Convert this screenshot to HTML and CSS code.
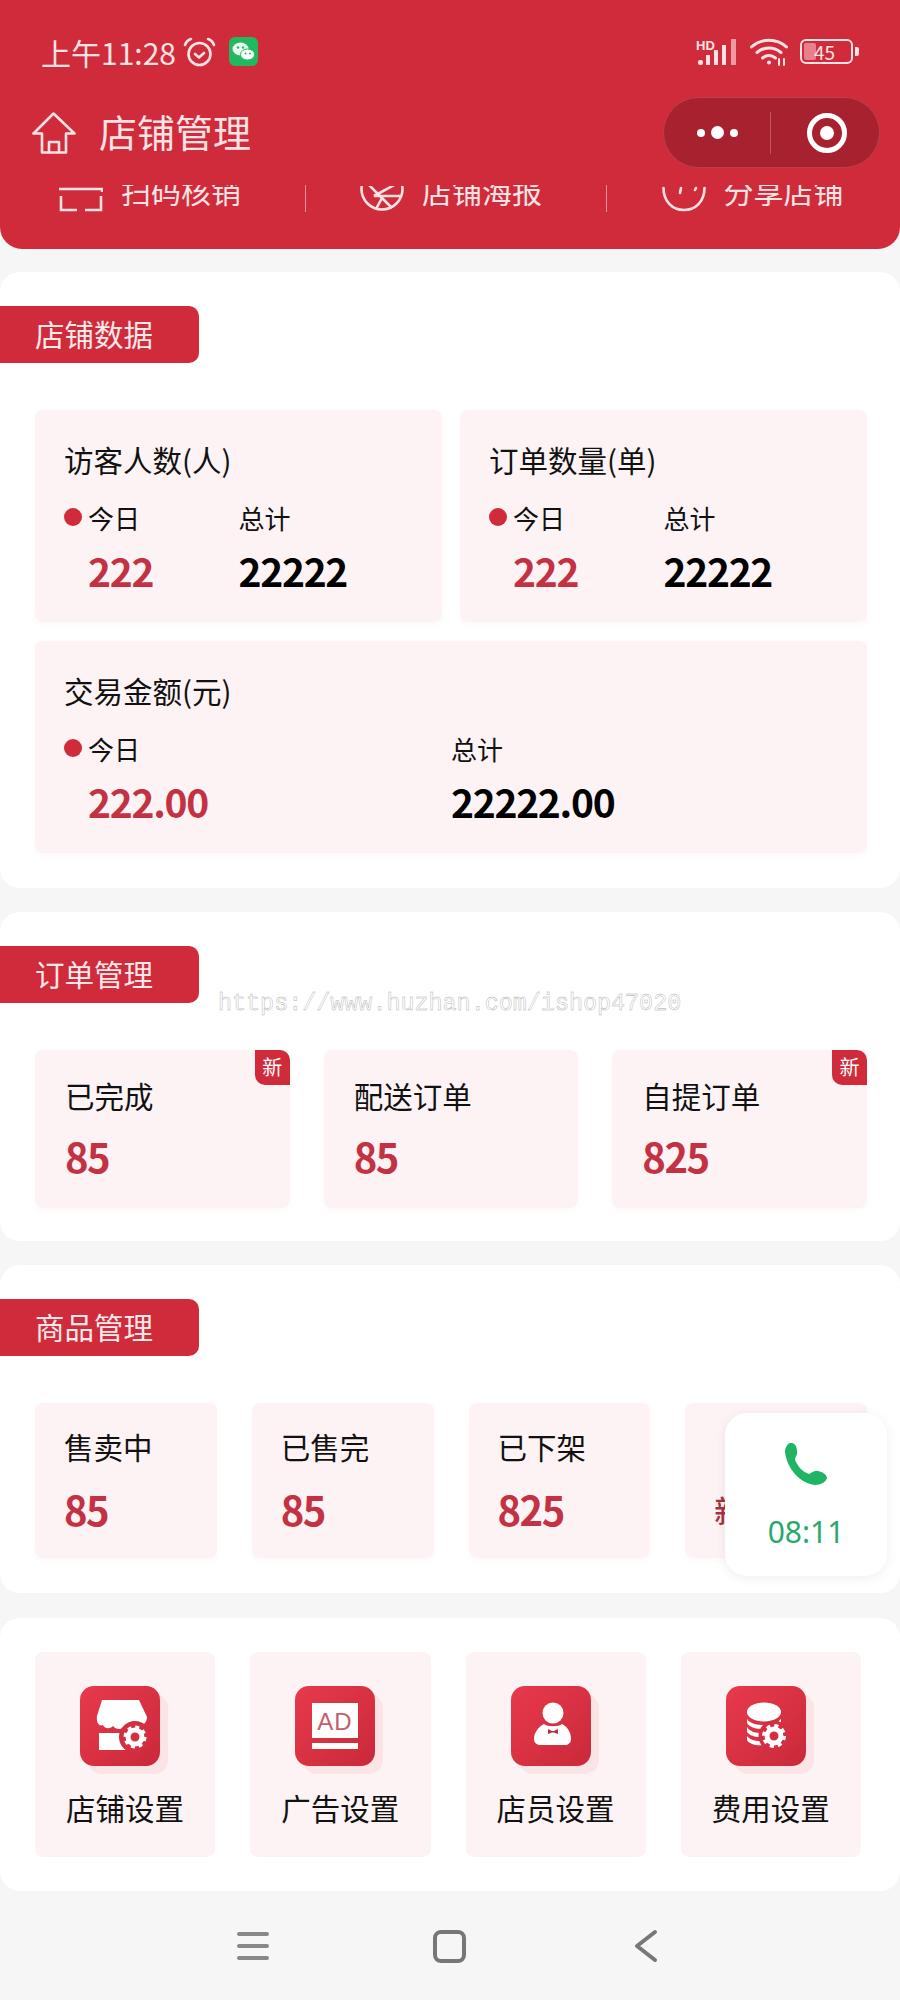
FILE: index.html
```html
<!DOCTYPE html>
<html lang="zh-CN">
<head>
  <meta charset="UTF-8">
  <title>店铺管理</title>
  <link rel="stylesheet" href="styles.css">
</head>
<body>
  <header class="header">
    <div class="status">
      <span class="status-time">上午11:28</span>
      <svg class="ico-alarm" width="33" height="30" viewBox="0 0 33 30" fill="none" stroke="#fbe3e5" stroke-width="2.6" stroke-linecap="round" stroke-linejoin="round">
        <circle cx="16.500" cy="17" r="11"/>
        <path d="M12 17l4 3.500 5-4.500"/>
        <path d="M2 8c1-3 3-5 6-6M31 8c-1-3-3-5-6-6"/>
      </svg>
      <svg class="ico-wechat" width="29" height="29" viewBox="0 0 29 29">
        <rect width="29" height="29" rx="6" fill="#21b95f"/>
        <ellipse cx="11.500" cy="12" rx="8" ry="6.500" fill="#eafaf0"/>
        <ellipse cx="18.500" cy="17.500" rx="7" ry="5.500" fill="#fff" stroke="#21b95f"/>
        <circle cx="9" cy="10.500" r="1.200" fill="#21b95f"/>
        <circle cx="14" cy="10.500" r="1.200" fill="#21b95f"/>
        <circle cx="16.500" cy="16.500" r="1" fill="#21b95f"/>
        <circle cx="21" cy="16.500" r="1" fill="#21b95f"/>
      </svg>
      <div class="status-right">
        <svg width="42" height="28" viewBox="0 0 42 28">
          <text x="0" y="12" class="ico-hd">HD</text>
          <rect x="2" y="22" width="5" height="5" rx="2" fill="#fbe3e5"/>
          <rect x="10" y="17" width="4" height="10" fill="#fbe3e5"/>
          <rect x="18" y="12" width="4" height="15" fill="#fbe3e5"/>
          <rect x="26" y="7" width="4" height="20" fill="#fbe3e5"/>
          <rect x="35" y="1" width="5" height="26" fill="#ee9aa3"/>
        </svg>
        <svg width="38" height="29" viewBox="0 0 38 29" fill="none" stroke="#fbe3e5" stroke-width="3" stroke-linecap="round">
          <path d="M1.500 10c10-9 25-9 35 0M7 15.500c7-6 17-6 24 0M12.500 21c4-3 9-3 13 0"/>
          <circle cx="19" cy="25.500" r="2" fill="#fbe3e5" stroke="none"/>
          <path d="M29 22v6M34 22v6" stroke-width="2"/>
        </svg>
        <div class="battery">
          <span class="battery-fill"></span>
          <span class="battery-num">45</span>
        </div>
      </div>
    </div>
    <div class="nav">
      <svg class="ico-home" width="44" height="42" viewBox="0 0 44 42" fill="none" stroke="#fbe3e5" stroke-width="2.600" stroke-linejoin="round">
        <path d="M21.500 1.500L1.500 21.500H10V40.500H34V21.500H42.500Z"/>
        <path d="M17 40.500V30H27V40.500"/>
      </svg>
      <h1 class="nav-title">店铺管理</h1>
      <div class="capsule">
        <div class="capsule-dots">
          <i class="dot-s"></i><i class="dot-b"></i><i class="dot-s"></i>
        </div>
        <div class="capsule-target"><i></i></div>
      </div>
    </div>
    <div class="quick">
      <div class="quick-item">
        <svg width="44" height="26" viewBox="0 0 44 26" fill="none" stroke="#fbe3e5" stroke-width="2.600">
          <path d="M0 3H44M43 3V6"/>
          <path d="M2 10V24H18M42 10V24H26"/>
        </svg>
        <span>扫码核销</span>
      </div>
      <div class="quick-item">
        <svg width="44" height="26" viewBox="0 0 44 26" fill="none" stroke="#fbe3e5" stroke-width="2.600">
          <circle cx="22" cy="3" r="20.500"/>
          <path d="M8 -2L22 12L16 23M36 -2L14 10H42M22 12L32 22"/>
        </svg>
        <span>店铺海报</span>
      </div>
      <div class="quick-item">
        <svg width="44" height="26" viewBox="0 0 44 26" fill="none" stroke="#fbe3e5" stroke-width="2.600" stroke-linecap="round">
          <path d="M1.500 2C1.500 15 10 24 22 24S42.500 15 42.500 2"/>
          <path d="M19 2L18 7M34 2L33 4" />
        </svg>
        <span>分享店铺</span>
      </div>
    </div>
  </header>

  <section class="panel panel-data">
    <div class="tag">店铺数据</div>
    <div class="data-grid">
      <div class="data-card">
        <div class="data-title">访客人数(人)</div>
        <div class="data-cols">
          <div class="data-col first">
            <div class="data-label"><i class="data-dot"></i>今日</div>
            <div class="data-num red">222</div>
          </div>
          <div class="data-col">
            <div class="data-label">总计</div>
            <div class="data-num">22222</div>
          </div>
        </div>
      </div>
      <div class="data-card">
        <div class="data-title">订单数量(单)</div>
        <div class="data-cols">
          <div class="data-col first">
            <div class="data-label"><i class="data-dot"></i>今日</div>
            <div class="data-num red">222</div>
          </div>
          <div class="data-col">
            <div class="data-label">总计</div>
            <div class="data-num">22222</div>
          </div>
        </div>
      </div>
      <div class="data-card wide">
        <div class="data-title">交易金额(元)</div>
        <div class="data-cols">
          <div class="data-col first">
            <div class="data-label"><i class="data-dot"></i>今日</div>
            <div class="data-num red">222.00</div>
          </div>
          <div class="data-col">
            <div class="data-label">总计</div>
            <div class="data-num">22222.00</div>
          </div>
        </div>
      </div>
    </div>
  </section>

  <section class="panel panel-orders">
    <div class="tag">订单管理</div>
    <div class="stat-row three">
      <div class="stat-card">
        <span class="badge">新</span>
        <div class="stat-title">已完成</div>
        <div class="stat-num">85</div>
      </div>
      <div class="stat-card">
        <div class="stat-title">配送订单</div>
        <div class="stat-num">85</div>
      </div>
      <div class="stat-card">
        <span class="badge">新</span>
        <div class="stat-title">自提订单</div>
        <div class="stat-num">825</div>
      </div>
    </div>
  </section>

  <section class="panel panel-goods">
    <div class="tag">商品管理</div>
    <div class="stat-row four">
      <div class="stat-card">
        <div class="stat-title">售卖中</div>
        <div class="stat-num">85</div>
      </div>
      <div class="stat-card">
        <div class="stat-title">已售完</div>
        <div class="stat-num">85</div>
      </div>
      <div class="stat-card">
        <div class="stat-title">已下架</div>
        <div class="stat-num">825</div>
      </div>
      <div class="stat-card">
        <div class="stat-title">&nbsp;</div>
        <div class="stat-new">新增</div>
      </div>
    </div>
  </section>

  <section class="panel panel-tools">
    <div class="tool-row">
      <div class="tool-card">
        <div class="tool-icon">
          <svg width="80" height="80" viewBox="0 0 80 80" fill="#fff">
            <path d="M22 14H59L67 31C67 37 62 41 58 39C55 43 50 43 46 39C43 44 36 44 33 40C29 44 24 42 23 39C19 41 16 36 17 30Z"/>
            <rect x="19" y="47" width="36" height="17"/>
            <circle cx="55" cy="51" r="16" fill="#d42f40"/>
            <circle cx="55" cy="51" r="9.500" fill="none" stroke="#fff" stroke-width="4" stroke-dasharray="3.730 3.730"/>
            <circle cx="55" cy="51" r="7" fill="none" stroke="#fff" stroke-width="5"/>
          </svg>
        </div>
        <div class="tool-name">店铺设置</div>
      </div>
      <div class="tool-card">
        <div class="tool-icon">
          <svg width="80" height="80" viewBox="0 0 80 80">
            <rect x="17" y="17" width="46" height="35" fill="#fff"/>
            <text x="40" y="44" class="ico-ad">AD</text>
            <rect x="17" y="57" width="46" height="6" fill="#fff"/>
          </svg>
        </div>
        <div class="tool-name">广告设置</div>
      </div>
      <div class="tool-card">
        <div class="tool-icon">
          <svg width="80" height="80" viewBox="0 0 80 80" fill="#fff">
            <circle cx="42" cy="27" r="10.500"/>
            <path d="M33 38C36 41 48 41 51 38C57 41 60 47 60 53C60 57 57 59 54 59H30C26 59 23 57 23 53C23 47 27 41 33 38Z"/>
            <path d="M37 43L41 45H43L47 43V48L43 46.500H41L37 48Z" fill="#b5303f"/>
          </svg>
        </div>
        <div class="tool-name">店员设置</div>
      </div>
      <div class="tool-card">
        <div class="tool-icon">
          <svg width="80" height="80" viewBox="0 0 80 80" fill="#fff">
            <ellipse cx="38" cy="26" rx="17" ry="9.500"/>
            <path d="M21 33C24 38 32 39 38 39C44 39 50 38 55 33V37C51 42 44 43 38 43C31 43 24 42 21 37Z"/>
            <path d="M21 41C24 46 30 47 36 47L34 51C28 51 23 49 21 46Z"/>
            <path d="M21 50C24 54 29 55 34 55L38 59C30 60 23 58 21 54Z"/>
            <circle cx="48" cy="50" r="15.500" fill="#d42f40"/>
            <circle cx="48" cy="50" r="10" fill="none" stroke="#fff" stroke-width="4" stroke-dasharray="3.930 3.930"/>
            <circle cx="48" cy="50" r="7" fill="none" stroke="#fff" stroke-width="5"/>
          </svg>
        </div>
        <div class="tool-name">费用设置</div>
      </div>
    </div>
  </section>

  <nav class="bottom-nav">
    <div class="ico-menu"><i></i><i></i><i></i></div>
    <div class="ico-square"></div>
    <svg class="ico-back" width="24" height="34" viewBox="0 0 24 34" fill="none" stroke="#777" stroke-width="4" stroke-linecap="round" stroke-linejoin="round">
      <path d="M21 3L3 17L21 31"/>
    </svg>
  </nav>

  <div class="watermark">https://www.huzhan.com/ishop47020</div>

  <div class="call">
    <svg width="42" height="42" viewBox="0 0 42 42">
      <path fill="#1fb564" d="M5 0C9-1 12 3 12 8C13 12 10 14 10 17C13 24 18 29 24 31C27 30 29 27 33 28C38 29 42 32 42 35C41 39 36 42 30 42C15 40 2 26 0 9C0 5 2 1 5 0Z"/>
    </svg>
    <div class="call-time">08:11</div>
  </div>
</body>
</html>
```

FILE: styles.css
```css
* {
  box-sizing: border-box;
}
body {
  position: relative;
  margin: 0;
  width: 900px;
  height: 2000px;
  overflow: hidden;
  background-color: #f6f6f6;
  color: #111;
  font-family: "Noto Sans CJK SC", "Noto Sans", sans-serif;
}
i {
  display: block;
}

/* header */
.header {
  height: 249px;
  background-color: #d02b3a;
  border-radius: 0 0 22px 22px;
  color: #fbe3e5;
  overflow: hidden;
}
.status {
  display: flex;
  align-items: center;
  height: 85px;
  padding: 18px 47px 0 41px;
}
.status-time {
  font-size: 30px;
  line-height: 40px;
  letter-spacing: 0;
}
.ico-alarm {
  margin-left: 7px;
}
.ico-wechat {
  margin-left: 13px;
}
.status-right {
  display: flex;
  align-items: center;
  gap: 12px;
  margin-left: auto;
}
.ico-hd {
  font: bold 13px "Liberation Sans", sans-serif;
  fill: #fbe3e5;
}
.battery {
  position: relative;
  width: 53px;
  height: 25px;
  border: 2px solid #fbe3e5;
  border-radius: 6px;
}
.battery::after {
  content: "";
  position: absolute;
  right: -8px;
  top: 6px;
  width: 4px;
  height: 9px;
  background-color: #fbe3e5;
  border-radius: 0 2px 2px 0;
}
.battery-fill {
  display: block;
  width: 12px;
  height: 17px;
  margin: 2px 0 0 2px;
  background-color: #e8808c;
  border-radius: 2px;
}
.battery-num {
  position: absolute;
  left: 12px;
  top: 0;
  font-size: 19px;
  line-height: 21px;
}
.nav {
  display: flex;
  align-items: center;
  height: 71px;
  margin-top: 12px;
  padding-left: 32px;
}
.nav-title {
  margin: -4px 0 0 23px;
  font-size: 38px;
  font-weight: 400;
  line-height: 50px;
}
.capsule {
  display: flex;
  align-items: center;
  width: 217px;
  height: 71px;
  margin-left: auto;
  margin-right: 20px;
  background-color: #a8212e;
  border: 1px solid #b9404c;
  border-radius: 36px;
}
.capsule-dots {
  display: flex;
  align-items: center;
  justify-content: center;
  gap: 6px;
  width: 107px;
  height: 42px;
  border-right: 1px solid #c25560;
}
.dot-s {
  width: 8px;
  height: 8px;
  border-radius: 50%;
  background-color: #fff;
}
.dot-b {
  width: 13px;
  height: 13px;
  border-radius: 50%;
  background-color: #fff;
}
.capsule-target {
  display: flex;
  align-items: center;
  justify-content: center;
  width: 40px;
  height: 40px;
  margin-left: 36px;
  border: 5px solid #fff;
  border-radius: 50%;
}
.capsule-target i {
  width: 14px;
  height: 14px;
  border-radius: 50%;
  background-color: #fff;
}
.quick {
  display: grid;
  grid-template-columns: repeat(3, 301px);
  height: 27px;
  margin-top: 17px;
  padding-left: 5px;
  overflow: hidden;
}
.quick-item {
  display: flex;
  align-items: flex-start;
  justify-content: center;
  gap: 18px;
  padding-right: 10px;
  border-right: 1px solid #e58f98;
}
.quick-item:last-child {
  border-right: 0;
}
.quick-item svg {
  margin-top: 1px;
}
.quick-item span {
  margin-top: -15px;
  font-size: 30px;
  line-height: 40px;
}

/* panels */
.panel {
  background-color: #fff;
  border-radius: 20px;
  margin-top: 24px;
  padding-top: 34px;
}
.panel-data {
  margin-top: 23px;
  height: 616px;
}
.panel-orders {
  height: 329px;
}
.panel-goods {
  height: 328px;
}
.panel-tools {
  height: 273px;
  margin-top: 25px;
  padding-top: 34px;
}
.tag {
  width: 199px;
  height: 57px;
  padding-left: 35px;
  background-color: #d02b3a;
  border-radius: 0 10px 10px 0;
  color: #fbe9ea;
  font-size: 29.500px;
  line-height: 55px;
}

/* data cards */
.data-grid {
  display: grid;
  grid-template-columns: 1fr 1fr;
  gap: 19px 18px;
  margin-top: 47px;
  padding: 0 33px 0 35px;
}
.data-card {
  height: 212px;
  padding-top: 29px;
  background-color: #fdf3f4;
  border-radius: 8px;
  box-shadow: 0 2px 6px rgba(208, 43, 58, 0.04);
}
.data-card.wide {
  grid-column: 1 / 3;
}
.data-title {
  padding-left: 29px;
  font-size: 29.500px;
  line-height: 40px;
}
.data-cols {
  display: grid;
  grid-template-columns: 1fr 1fr;
  margin-top: 21px;
}
.data-col.first {
  padding-left: 29px;
}
.data-label {
  position: relative;
  font-size: 26px;
  line-height: 36px;
}
.data-col.first .data-label {
  padding-left: 24px;
}
.data-dot {
  position: absolute;
  left: 0;
  top: 8px;
  width: 18px;
  height: 18px;
  border-radius: 50%;
  background-color: #d02b3a;
}
.data-num {
  margin-top: 10px;
  font-size: 39px;
  font-weight: 700;
  line-height: 48px;
  letter-spacing: -1.300px;
  color: #000;
}
.data-num.red {
  padding-left: 24px;
  color: #c33244;
}

/* stat cards */
.stat-row {
  display: grid;
  margin-top: 47px;
  padding: 0 33px 0 35px;
}
.stat-row.three {
  grid-template-columns: repeat(3, 1fr);
  gap: 34px;
}
.stat-row.four {
  grid-template-columns: repeat(4, 1fr);
  gap: 35px;
}
.stat-card {
  position: relative;
  padding: 25px 0 0 30px;
  background-color: #fdf3f4;
  border-radius: 8px;
  box-shadow: 0 2px 6px rgba(208, 43, 58, 0.04);
}
.three .stat-card {
  height: 158px;
}
.four .stat-card {
  height: 155px;
  padding-top: 23px;
  padding-left: 29px;
}
.stat-title {
  font-size: 29.500px;
  line-height: 40px;
}
.stat-num {
  margin-top: 17px;
  font-size: 40px;
  font-weight: 700;
  line-height: 48px;
  letter-spacing: -1.500px;
  color: #c33244;
}
.four .stat-num,
.four .stat-new {
  margin-top: 19px;
}
.stat-new {
  font-size: 30px;
  font-weight: 500;
  line-height: 48px;
  color: #a83040;
}
.badge {
  position: absolute;
  right: 0;
  top: 0;
  width: 35px;
  height: 35px;
  background-color: #d02b3a;
  border-radius: 0 10px 0 10px;
  color: #fff;
  font-size: 20px;
  line-height: 34px;
  text-align: center;
}

/* tools */
.tool-row {
  display: grid;
  grid-template-columns: repeat(4, 1fr);
  gap: 35px;
  padding: 0 39px 0 35px;
}
.tool-card {
  height: 205px;
  padding-top: 34px;
  background-color: #fdf3f4;
  border-radius: 8px;
  text-align: center;
}
.tool-icon {
  width: 80px;
  height: 80px;
  margin: 0 auto;
  position: relative;
  left: -5px;
  background: linear-gradient(135deg, #e83a4c, #c9293a);
  border-radius: 14px;
  box-shadow: 8px 8px 0 rgba(208, 43, 58, 0.07);
}
.tool-icon svg {
  display: block;
}
.ico-ad {
  font: 24px "Liberation Sans", sans-serif;
  fill: #c5606b;
  text-anchor: middle;
  letter-spacing: 1px;
}
.tool-name {
  margin-top: 21px;
  font-size: 29.500px;
  line-height: 40px;
}

/* android nav */
.bottom-nav {
  position: relative;
  display: flex;
  align-items: center;
  height: 110px;
  padding-left: 237px;
  padding-top: 0;
}
.ico-menu {
  display: flex;
  flex-direction: column;
  gap: 8px;
  width: 32px;
}
.ico-menu i {
  height: 4px;
  background-color: #888;
  border-radius: 2px;
}
.ico-square {
  width: 33px;
  height: 33px;
  margin-left: 164px;
  border: 4px solid #777;
  border-radius: 8px;
}
.ico-back {
  margin-left: 168px;
}

/* overlays */
.watermark {
  position: absolute;
  left: 218px;
  top: 989px;
  font-family: "Liberation Mono", monospace;
  font-size: 23.400px;
  line-height: 30px;
  color: #fff;
  -webkit-text-stroke: 0.4px #a8a8a8;
}
.call {
  position: absolute;
  left: 725px;
  top: 1413px;
  width: 162px;
  height: 163px;
  padding-top: 30px;
  background-color: #fff;
  border-radius: 22px;
  box-shadow: 0 2px 12px rgba(0, 0, 0, 0.07);
  text-align: center;
}
.call svg {
  display: block;
  margin: 0 auto;
}
.call-time {
  margin-top: 25px;
  font-family: "Noto Sans", sans-serif;
  font-size: 30px;
  line-height: 44px;
  color: #2aa86a;
}
```
